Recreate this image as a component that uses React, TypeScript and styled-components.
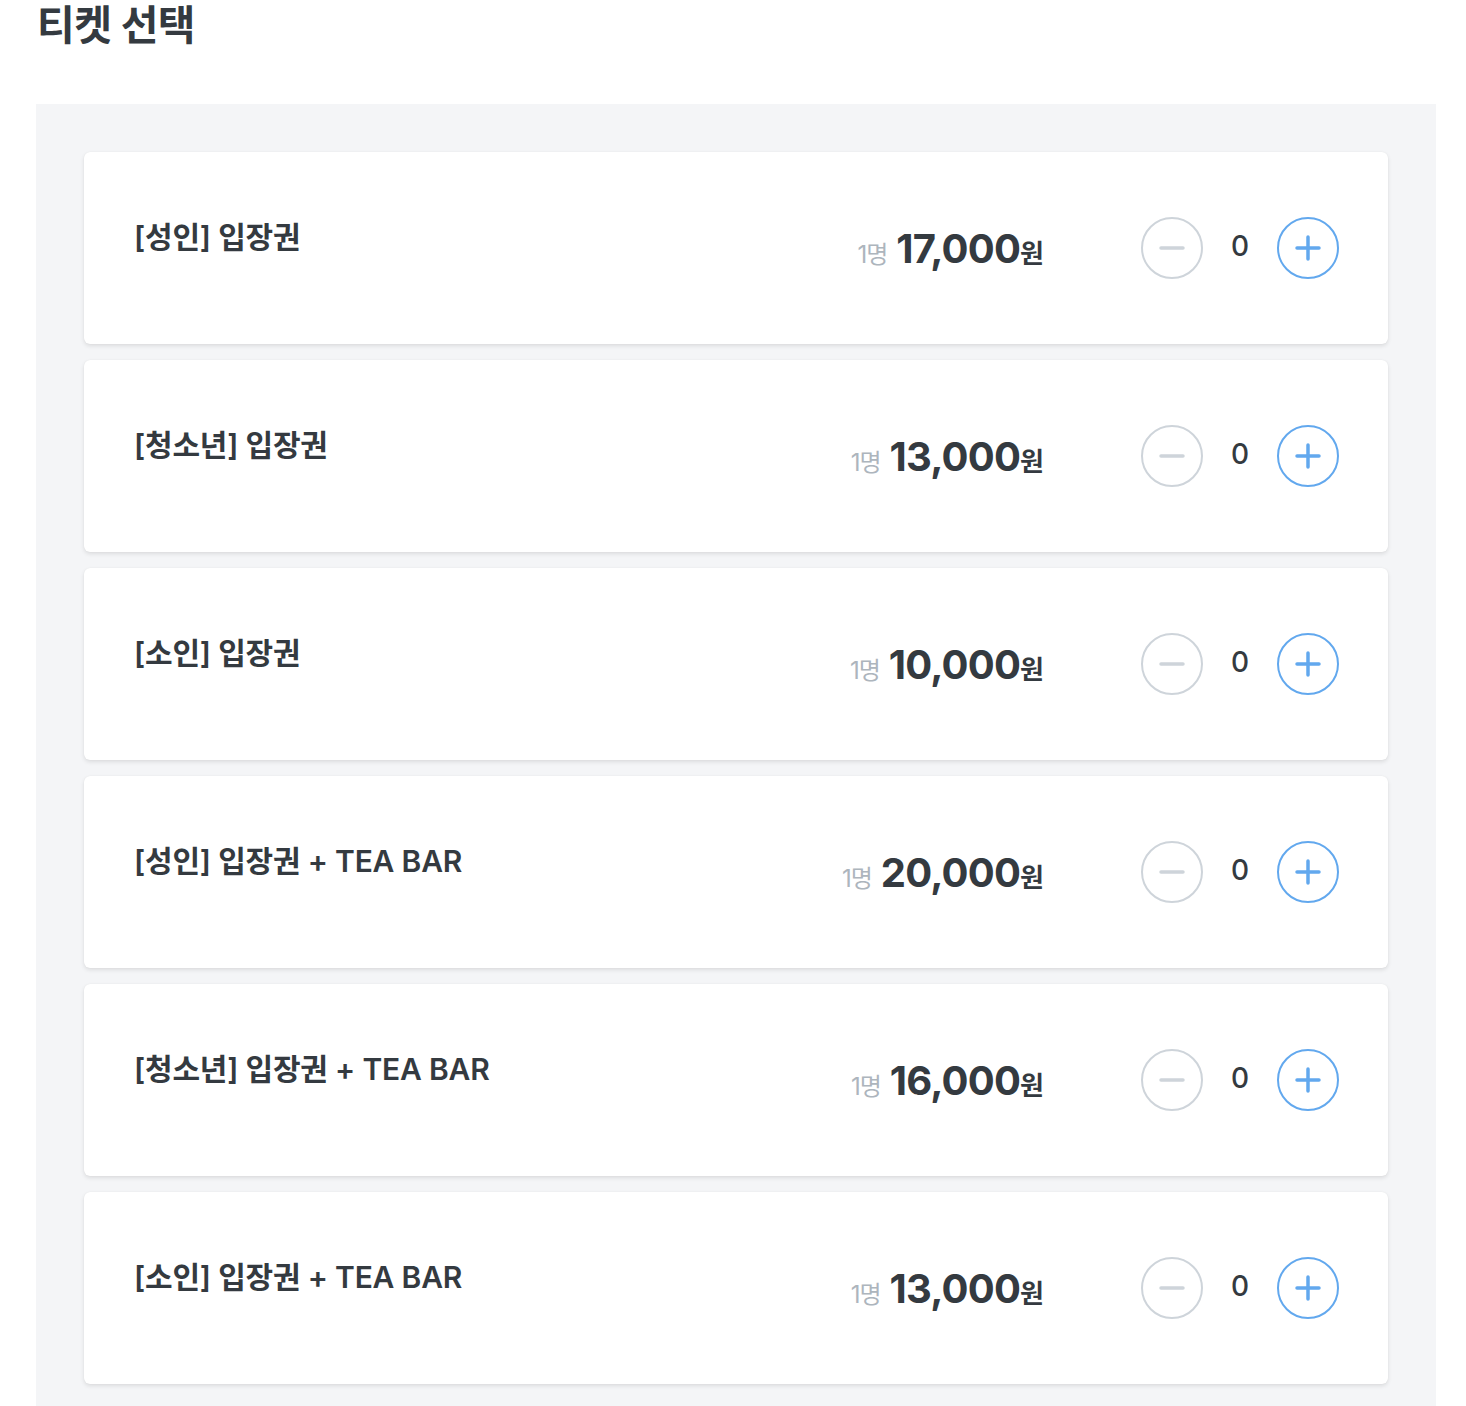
import React, { useState } from "react";
import styled, { createGlobalStyle } from "styled-components";

const GlobalStyle = createGlobalStyle`
  body {
    margin: 0;
    background: #ffffff;
    font-family: Inter, "Noto Sans CJK KR", "Noto Sans", sans-serif;
    color: #343a40;
  }
`;

interface Ticket {
  name: string;
  price: number;
}

const tickets: Ticket[] = [
  { name: "[성인] 입장권", price: 17000 },
  { name: "[청소년] 입장권", price: 13000 },
  { name: "[소인] 입장권", price: 10000 },
  { name: "[성인] 입장권 + TEA BAR", price: 20000 },
  { name: "[청소년] 입장권 + TEA BAR", price: 16000 },
  { name: "[소인] 입장권 + TEA BAR", price: 13000 },
];

const Page = styled.div`
  width: 1400px;
  padding-left: 36px;
`;

const Heading = styled.h2`
  margin: 0 0 54px;
  padding-left: 1px;
  font-size: 41px;
  line-height: 50px;
  letter-spacing: -0.5px;
  font-weight: 700;
  color: #343a40;
`;

const Panel = styled.div`
  background: #f4f5f7;
  padding: 48px 48px 48px;
  display: flex;
  flex-direction: column;
  gap: 16px;
`;

const Card = styled.div`
  height: 192px;
  box-sizing: border-box;
  padding: 0 49px 0 50px;
  display: flex;
  align-items: center;
  background: #ffffff;
  border-radius: 6px;
  box-shadow: 0 2px 4px rgba(0, 0, 0, 0.1), 0 0 1px rgba(0, 0, 0, 0.08);
`;

const Title = styled.div`
  flex: 1;
  margin-bottom: 22px;
  font-size: 30px;
  line-height: 40px;
  font-weight: 600;
  letter-spacing: -0.2px;
  color: #343a40;
`;

const Price = styled.div`
  display: flex;
  align-items: baseline;
  margin-right: 98px;
  color: #343a40;
`;

const Unit = styled.span`
  font-size: 24px;
  color: #adb5bd;
  margin-right: 9px;
  letter-spacing: -1px;
`;

const Amount = styled.span`
  font-size: 40px;
  font-weight: 700;
  letter-spacing: -0.8px;
`;

const Won = styled.span`
  font-size: 26px;
  font-weight: 700;
  letter-spacing: -1px;
`;

const Counter = styled.div`
  display: flex;
  align-items: center;
`;

const RoundButton = styled.button<{ $active?: boolean }>`
  width: 62px;
  height: 62px;
  padding: 0;
  border-radius: 50%;
  border: 2px solid ${(p) => (p.$active ? "#62a8ee" : "#ced4da")};
  background: #ffffff;
  color: ${(p) => (p.$active ? "#62a8ee" : "#ced4da")};
  display: flex;
  align-items: center;
  justify-content: center;
  cursor: pointer;
`;

const Count = styled.span`
  width: 74px;
  text-align: center;
  font-size: 28px;
  line-height: 28px;
  font-weight: 500;
  color: #343a40;
  margin-top: -4px;
`;

const MinusIcon = () => (
  <svg width="28" height="28" viewBox="0 0 28 28">
    <line x1="3" y1="14" x2="25" y2="14" stroke="currentColor" strokeWidth="3.5" strokeLinecap="round" />
  </svg>
);

const PlusIcon = () => (
  <svg width="28" height="28" viewBox="0 0 28 28">
    <line x1="3" y1="14" x2="25" y2="14" stroke="currentColor" strokeWidth="3.5" strokeLinecap="round" />
    <line x1="14" y1="3" x2="14" y2="25" stroke="currentColor" strokeWidth="3.5" strokeLinecap="round" />
  </svg>
);

const TicketRow: React.FC<{ ticket: Ticket }> = ({ ticket }) => {
  const [count, setCount] = useState(0);
  return (
    <Card>
      <Title>{ticket.name}</Title>
      <Price>
        <Unit>1명</Unit>
        <Amount>{ticket.price.toLocaleString("ko-KR")}</Amount>
        <Won>원</Won>
      </Price>
      <Counter>
        <RoundButton aria-label="빼기" onClick={() => setCount(Math.max(0, count - 1))}>
          <MinusIcon />
        </RoundButton>
        <Count>{count}</Count>
        <RoundButton $active aria-label="더하기" onClick={() => setCount(count + 1)}>
          <PlusIcon />
        </RoundButton>
      </Counter>
    </Card>
  );
};

export default function App() {
  return (
    <Page>
      <GlobalStyle />
      <Heading>티켓 선택</Heading>
      <Panel>
        {tickets.map((t) => (
          <TicketRow key={t.name} ticket={t} />
        ))}
      </Panel>
    </Page>
  );
}
